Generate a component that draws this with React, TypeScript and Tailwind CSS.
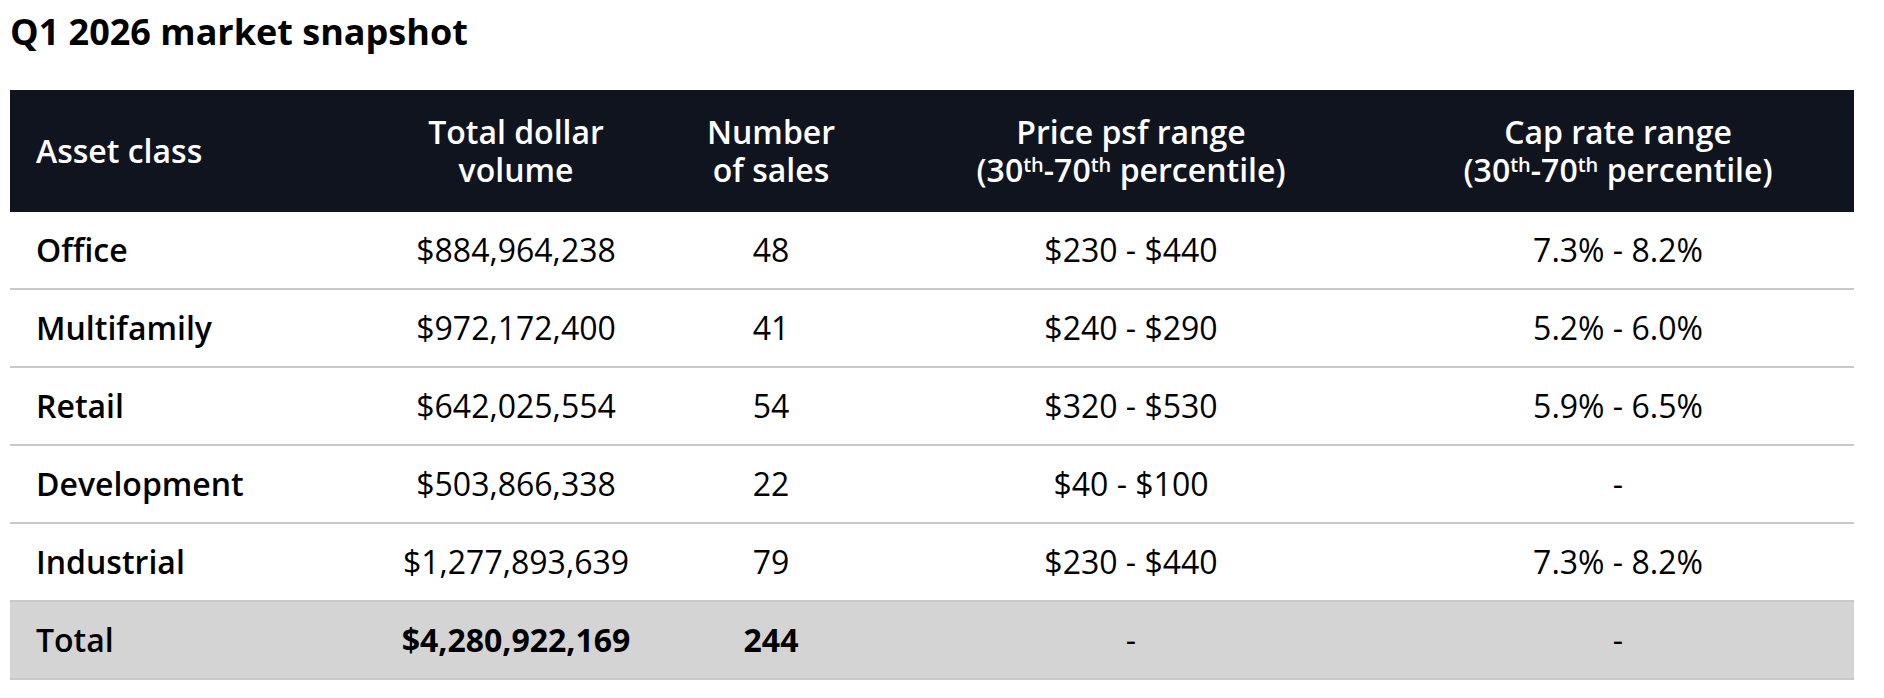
import React from "react";

const COLS = "grid grid-cols-[360px_292px_218px_502px_472px]";

const ROWS = [
  { name: "Office", volume: "$884,964,238", sales: "48", psf: "$230 - $440", cap: "7.3% - 8.2%" },
  { name: "Multifamily", volume: "$972,172,400", sales: "41", psf: "$240 - $290", cap: "5.2% - 6.0%" },
  { name: "Retail", volume: "$642,025,554", sales: "54", psf: "$320 - $530", cap: "5.9% - 6.5%" },
  { name: "Development", volume: "$503,866,338", sales: "22", psf: "$40 - $100", cap: "-" },
  { name: "Industrial", volume: "$1,277,893,639", sales: "79", psf: "$230 - $440", cap: "7.3% - 8.2%" },
];

function Pct() {
  return (
    <>
      (30<sup className="text-[20px] top-[-0.5em] leading-none">th</sup>-70<sup className="text-[20px] top-[-0.5em] leading-none">th</sup> percentile)
    </>
  );
}

export default function App() {
  return (
    <div className="min-h-screen bg-white pl-[10px] pr-[30px] pt-2 text-black font-['Open_Sans',sans-serif]">
      <h1 className="text-[36px] leading-[48px] font-bold mb-[34px]">Q1 2026 market snapshot</h1>

      <div className="w-[1844px]">
        {/* Header */}
        <div className={`${COLS} h-[122px] items-center bg-[#10141f] text-white text-[32px] font-semibold leading-[38px]`}>
          <div className="pl-[26px]">Asset class</div>
          <div className="text-center">Total dollar<br />volume</div>
          <div className="text-center">Number<br />of sales</div>
          <div className="text-center">Price psf range<br /><Pct /></div>
          <div className="text-center">Cap rate range<br /><Pct /></div>
        </div>

        {/* Body */}
        {ROWS.map((r) => (
          <div key={r.name} className={`${COLS} h-[78px] items-center border-b-2 border-[#c9c9c4] text-[32px]`}>
            <div className="pl-[26px] font-semibold">{r.name}</div>
            <div className="text-center">{r.volume}</div>
            <div className="text-center">{r.sales}</div>
            <div className="text-center">{r.psf}</div>
            <div className="text-center">{r.cap}</div>
          </div>
        ))}

        {/* Total */}
        <div className={`${COLS} h-[78px] items-center border-b-2 border-[#c9c9c4] bg-[#d4d4d4] text-[32px]`}>
          <div className="pl-[26px] font-semibold">Total</div>
          <div className="text-center font-bold">$4,280,922,169</div>
          <div className="text-center font-bold">244</div>
          <div className="text-center">-</div>
          <div className="text-center">-</div>
        </div>
      </div>
    </div>
  );
}
